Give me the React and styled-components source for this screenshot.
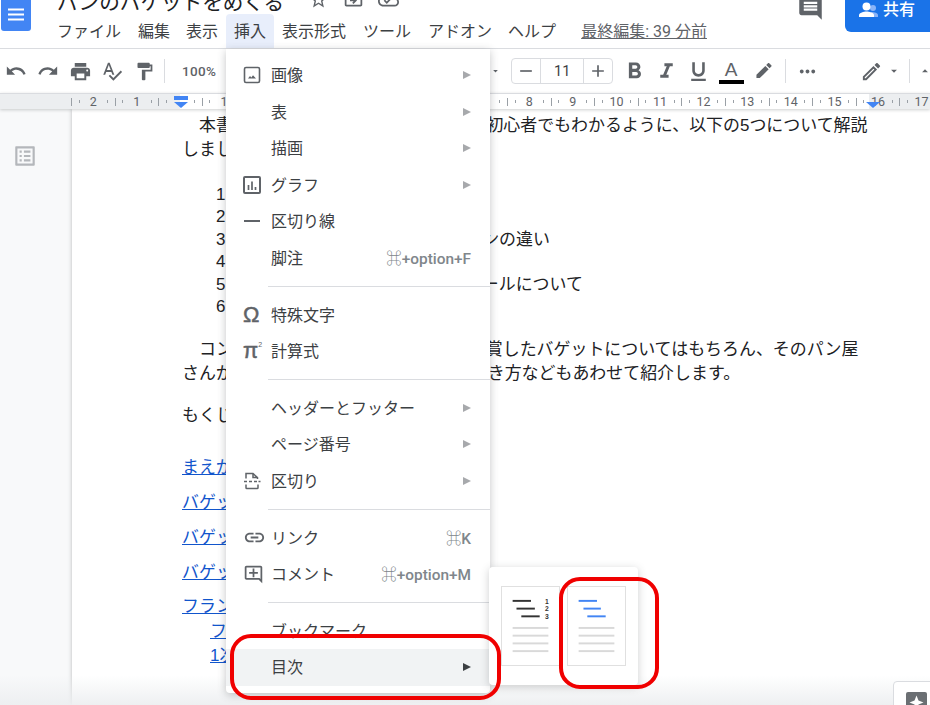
import React from 'react'
import styled, { createGlobalStyle } from 'styled-components'
import {
  MdUndo, MdRedo, MdPrint, MdSpellcheck, MdFormatPaint, MdRemove, MdAdd, MdFormatBold, MdFormatItalic,
  MdFormatUnderlined, MdMoreHoriz, MdOutlineEdit, MdStarBorder, MdOutlineDriveFileMove, MdOutlineCloudDone,
  MdLink, MdOutlineAddComment, MdOutlineListAlt, MdInsertComment, MdArrowDropDown, MdArrowDropUp,
} from 'react-icons/md'

const Global = createGlobalStyle`
  html, body { margin: 0; padding: 0; background: #fff; }
  * { box-sizing: border-box; }
  body { font-family: "Roboto", "Noto Sans CJK JP", sans-serif; color: #202124; }
`

const Page = styled.div`
  position: relative;
  width: 930px;
  height: 705px;
  overflow: hidden;
  display: flex;
  flex-direction: column;
  background: #fff;
`

const Header = styled.header`
  flex: 0 0 49px;
  display: flex;
  border-bottom: 1px solid #dadce0;
  overflow: hidden;
`

const Logo = styled.svg`
  flex: none;
  width: 30px;
  height: 31px;
  margin-left: 1px;
`

const HeadMain = styled.div`
  flex: 1;
  margin-left: 26px;
  margin-top: -11px;
`

const TitleRow = styled.div`
  height: 28px;
  display: flex;
  align-items: center;
  color: #5f6368;
`

const Title = styled.div`
  width: 227px;
  margin-right: 24px;
  font-size: 20.6px;
  line-height: 28px;
  color: #202124;
  white-space: nowrap;
`

const TitleIcon = styled.span`
  width: 35px;
  margin-top: -8px;
  font-size: 21px;
  display: flex;
`

const MenuBar = styled.nav`
  display: flex;
  align-items: center;
  height: 34px;
  margin-top: -3px;
  margin-left: -8px;
`

const MenuName = styled.span`
  height: 34px;
  padding: 0 8px;
  margin-right: ${p => p.$gap || 0}px;
  font-size: 16px;
  line-height: 35px;
  white-space: nowrap;
  color: #3c4043;
  border-radius: 4px 4px 0 0;
  background: ${p => (p.$open ? '#e8eefb' : 'transparent')};
`

const LastEdit = styled.span`
  margin: 0 0 3px 17px;
  font-size: 16px;
  color: #5f6368;
  text-decoration: underline;
  white-space: nowrap;
`

const HeadRight = styled.div`
  flex: none;
  display: flex;
  align-items: flex-start;
  color: #5f6368;
`

const CommentIcon = styled.span`
  display: flex;
  margin: -5px 21px 0 0;
  font-size: 27px;
`

const Share = styled.div`
  width: 85px;
  height: 32px;
  display: flex;
  align-items: flex-start;
  gap: 4px;
  padding: 0 0 0 14px;
  background: #1a73e8;
  color: #fff;
  font-size: 16px;
  line-height: 20px;
  font-weight: 500;
  border-radius: 0 0 0 6px;
`

const ShareIcon = styled.svg`
  width: 20px;
  height: 16px;
  margin-top: 2px;
`

const Toolbar = styled.div`
  flex: 0 0 44px;
  display: flex;
  align-items: center;
  color: #5f6368;
`

const ToolGroup = styled.div`
  display: flex;
  align-items: center;
  margin-left: ${p => p.$left || 0}px;
`

const Tool = styled.span`
  width: ${p => p.$w || 32}px;
  margin-left: ${p => p.$left || 0}px;
  display: flex;
  justify-content: center;
  align-items: center;
  font-size: ${p => p.$size || 22}px;
`

const MarkerIcon = styled.svg`
  width: 18px;
  height: 16px;
`

const Sep = styled.span`
  width: 1px;
  height: 24px;
  margin: 0 ${p => p.$m || 11}px;
  background: #dadce0;
`

const Zoom = styled.span`
  margin-left: 13px;
  font-size: 13.5px;
  font-weight: 500;
  letter-spacing: .3px;
`

const Stepper = styled.div`
  width: 102px;
  height: 26px;
  margin: 0 5px 0 10px;
  display: flex;
  border: 1px solid #dadce0;
  border-radius: 4px;
`

const StepBtn = styled.span`
  width: 28px;
  display: flex;
  align-items: center;
  justify-content: center;
  font-size: 20px;
`

const StepValue = styled.span`
  flex: 1;
  text-align: center;
  line-height: 26px;
  font-size: 14.5px;
  color: #3c4043;
  border-left: 1px solid #dadce0;
  border-right: 1px solid #dadce0;
`

const ColorA = styled.span`
  width: 26px;
  margin: 0 4px;
  display: flex;
  flex-direction: column;
  align-items: center;
  font-size: 19px;
  font-family: "Liberation Sans", sans-serif;
  line-height: 21px;
`

const ColorBar = styled.span`
  width: 25px;
  height: 4px;
  background: #000;
`

const Ruler = styled.div`
  position: relative;
  flex: 0 0 16px;
  display: flex;
  padding-left: 71px;
  overflow: hidden;
  border-top: 1px solid #dadce0;
  background: linear-gradient(to right, #eceef0 180px, #fff 180px, #fff 869px, #eceef0 869px);
  box-shadow: 0 1px 3px rgba(60, 64, 67, .25);
  z-index: 1;
`

const RulerCell = styled.div`
  flex: 0 0 43.6px;
  display: flex;
  align-items: center;
  justify-content: space-between;
  font-size: 12.5px;
  font-family: "Roboto", sans-serif;
  color: #5f6368;
`

const Tick = styled.i`
  width: 1px;
  height: ${p => (p.$long ? 8 : 3)}px;
  background: #9aa0a6;
`

const RulerNum = styled.span`
  width: 14px;
  text-align: center;
`

const IndentBar = styled.div`
  position: absolute;
  left: 174px;
  top: 96px;
  width: 14px;
  height: 4px;
  background: #4285f4;
  z-index: 1;
`

const IndentMark = styled.div`
  position: absolute;
  left: ${p => p.$x}px;
  top: 102px;
  width: 0;
  height: 0;
  border-left: 7px solid transparent;
  border-right: 7px solid transparent;
  border-top: 6px solid #4285f4;
  z-index: 1;
`

const Body = styled.div`
  flex: 1;
  display: flex;
  min-height: 0;
`

const Side = styled.aside`
  flex: 0 0 72px;
  padding: 34px 0 0 12px;
  background: #f8f9fa;
  color: #b4b7bb;
  font-size: 26px;
`

const Doc = styled.main`
  flex: 1;
  padding: 4.5px 0 0 110px;
  font-family: "Liberation Sans", "Noto Sans CJK JP", sans-serif;
  font-size: 16.95px;
  line-height: 24px;
  color: #202124;
  box-shadow: 0 0 4px rgba(60, 64, 67, .35);
  white-space: nowrap;
  overflow: hidden;
`

const Para = styled.div`
  margin-top: ${p => p.$top || 0}px;
`

const Indent = styled.span`
  display: inline-block;
  width: 17px;
`

const ListItem = styled.div`
  display: flex;
  height: 22.6px;
  line-height: 22.6px;
  padding-left: 34px;
`

const ListNum = styled.span`
  width: 29px;
`

const DocLink = styled.a`
  display: block;
  width: fit-content;
  margin: ${p => p.$top || 0}px 0 0 ${p => p.$left || 0}px;
  color: #1155cc;
  text-decoration: underline;
`

const BottomFade = styled.div`
  position: absolute;
  left: 0;
  right: 0;
  bottom: 0;
  height: 30px;
  background: linear-gradient(to bottom, rgba(241, 243, 244, 0), rgba(236, 238, 240, .9));
  pointer-events: none;
`

const Explore = styled.div`
  position: absolute;
  right: -6px;
  bottom: -6px;
  width: 43px;
  height: 30px;
  padding: 10px 0 0 12px;
  background: #fff;
  border: 1px solid #dadce0;
  border-radius: 4px;
`

const ExploreIcon = styled.svg`
  display: block;
  width: 21px;
  height: 21px;
`

const Menu = styled.div`
  position: absolute;
  left: 226px;
  top: 49px;
  width: 264px;
  height: 644px;
  padding: 7.7px 0;
  background: #fff;
  border-radius: 0 0 4px 4px;
  box-shadow: 0 2px 8px rgba(60, 64, 67, .3);
  z-index: 2;
`

const Row = styled.div`
  height: 36.6px;
  display: flex;
  align-items: center;
  padding: 0 19px 0 17px;
  background: ${p => (p.$active ? '#f1f3f4' : 'transparent')};
`

const RowIcon = styled.span`
  flex: 0 0 28px;
  display: flex;
  align-items: center;
  color: #5f6368;
  font-size: ${p => p.$size || 21}px;
`

const Glyph = styled.span`
  font-family: "Liberation Sans", sans-serif;
  font-size: 22px;
  line-height: 1;
  -webkit-text-stroke: .5px currentColor;
`

const Sup = styled.sup`
  font-size: 7px;
  vertical-align: 11px;
  line-height: 0;
  -webkit-text-stroke: 0;
`

const RowLabel = styled.span`
  flex: 1;
  margin-bottom: 2px;
  font-size: 16px;
  color: #3c4043;
  white-space: nowrap;
`

const Shortcut = styled.span`
  margin-bottom: 2px;
  font-size: 15.4px;
  font-weight: 500;
  color: #80868b;
  white-space: nowrap;
`

const Arrow = styled.i`
  width: 0;
  height: 0;
  border-top: 4px solid transparent;
  border-bottom: 4px solid transparent;
  border-left: 8px solid ${p => (p.$dark ? '#3c4043' : '#a7a9ac')};
`

const Divider = styled.div`
  height: 1px;
  margin: 10px 0 9px 42px;
  background: #dadce0;
`

const RowSvg = styled.svg`
  width: 18px;
  height: 18px;
`

const Flyout = styled.div`
  position: absolute;
  left: 489px;
  top: 567px;
  width: 149px;
  height: 118px;
  display: flex;
  gap: 7px;
  padding: 19px 0 0 12px;
  background: #fff;
  border-radius: 4px;
  box-shadow: 0 2px 8px rgba(60, 64, 67, .25);
  z-index: 3;
`

const Thumb = styled.svg`
  flex: none;
  width: 59px;
  height: 80px;
  border: 1px solid #e0e0e0;
`

const Ring = styled.div`
  position: absolute;
  left: ${p => p.$x}px;
  top: ${p => p.$y}px;
  width: ${p => p.$w}px;
  height: ${p => p.$h}px;
  border: 4px solid #f00000;
  border-radius: 21px;
  z-index: 4;
`

const ImageIcon = () => (
  <RowSvg viewBox="0 0 18 18" fill="none" stroke="currentColor">
    <rect x="1.500" y="1.500" width="15" height="15" rx="1.500" strokeWidth="1.600" />
    <path d="M5 12.500l2-2.400 1.400 1.400 1.600-2.200 3 3.200z" fill="currentColor" stroke="none" />
  </RowSvg>
)

const ChartIcon = () => (
  <RowSvg viewBox="0 0 18 18" fill="none" stroke="currentColor">
    <rect x="1" y="1" width="16" height="16" rx="1" strokeWidth="2" />
    <path d="M5.500 14V9M9 14V5.500M12.500 14v-3" strokeWidth="1.700" />
  </RowSvg>
)

const LineIcon = () => (
  <RowSvg viewBox="0 0 18 18"><rect x="1" y="8" width="16" height="2" fill="currentColor" /></RowSvg>
)

const BreakIcon = () => (
  <RowSvg viewBox="0 0 18 18" fill="none" stroke="currentColor" strokeWidth="1.500">
    <path d="M3 6.500V1.500h7l4.500 4V7M10 1.500v4h4.500" />
    <path d="M1 9.500h3M6 9.500h3M11 9.500h3M15.500 9.500h2" />
    <path d="M3 12.500v3.200c0 .5.300.8.800.8h10.400c.5 0 .8-.3.800-.8v-3.200" />
  </RowSvg>
)

const Item = ({ icon, size, label, more, keys, active }) => (
  <Row $active={active}>
    <RowIcon $size={size}>{icon}</RowIcon>
    <RowLabel>{label}</RowLabel>
    {keys && <Shortcut>{keys}</Shortcut>}
    {more && <Arrow $dark={active} />}
  </Row>
)

const ThumbLines = ({ x }) => (
  <g fill="#d9d9d9">
    {[41, 49, 57, 65].map(y => <rect key={y} x={x} y={y} width="37" height="2" />)}
  </g>
)

const rulerCells = ['2', '1', '', '1', '2', '3', '4', '5', '6', '7', '8', '9', '10', '11', '12', '13', '14', '15', '16', '17']

const App = () => (
  <Page>
    <Global />
    <Header>
      <Logo viewBox="0 0 30 31">
        <path d="M0 0h30v28a3 3 0 0 1-3 3H3a3 3 0 0 1-3-3z" fill="#4285f4" />
        <path d="M7 8.500h16v2H7zM7 13.500h16v2H7zM7 18.500h16v2H7z" fill="#fff" />
      </Logo>
      <HeadMain>
        <TitleRow>
          <Title>パンのバケットをめくる</Title>
          <TitleIcon><MdStarBorder /></TitleIcon>
          <TitleIcon><MdOutlineDriveFileMove /></TitleIcon>
          <TitleIcon><MdOutlineCloudDone /></TitleIcon>
        </TitleRow>
        <MenuBar>
          <MenuName $gap={1}>ファイル</MenuName>
          <MenuName>編集</MenuName>
          <MenuName>表示</MenuName>
          <MenuName $open>挿入</MenuName>
          <MenuName $gap={1}>表示形式</MenuName>
          <MenuName $gap={1}>ツール</MenuName>
          <MenuName>アドオン</MenuName>
          <MenuName>ヘルプ</MenuName>
          <LastEdit>最終編集: 39 分前</LastEdit>
        </MenuBar>
      </HeadMain>
      <HeadRight>
        <CommentIcon><MdInsertComment /></CommentIcon>
        <Share>
          <ShareIcon viewBox="0 0 20 16">
            <circle cx="14" cy="6" r="3" fill="#8ab4f8" />
            <path d="M12 10c3.500 0 7 1.300 7 3v2h-7z" fill="#8ab4f8" />
            <circle cx="7.500" cy="4.500" r="4" fill="#fff" />
            <path d="M0 15v-2c0-2.400 5-3.600 7.500-3.600S15 10.600 15 13v2z" fill="#fff" />
          </ShareIcon>
          共有
        </Share>
      </HeadRight>
    </Header>

    <Toolbar>
      <ToolGroup>
        <Tool><MdUndo /></Tool>
        <Tool><MdRedo /></Tool>
        <Tool $size={23}><MdPrint /></Tool>
        <Tool><MdSpellcheck /></Tool>
        <Tool $size={21}><MdFormatPaint /></Tool>
        <Sep $m={4} />
        <Zoom>100%</Zoom>
      </ToolGroup>
      <ToolGroup $left={274}>
        <Tool $w={11} $size={24}><MdArrowDropDown /></Tool>
        <Stepper>
          <StepBtn><MdRemove /></StepBtn>
          <StepValue>11</StepValue>
          <StepBtn><MdAdd /></StepBtn>
        </Stepper>
        <Tool $size={27}><MdFormatBold /></Tool>
        <Tool $size={25}><MdFormatItalic /></Tool>
        <Tool $size={25}><MdFormatUnderlined /></Tool>
        <ColorA>A<ColorBar /></ColorA>
        <Tool>
          <MarkerIcon viewBox="3 0 19 18" fill="currentColor">
            <path d="M17.750 7L14 3.250l-10 10V17h3.750l10-10zm2.960-2.960c.39-.39.39-1.020 0-1.410L18.370.29c-.39-.39-1.020-.39-1.410 0L15 2.250 18.750 6l1.960-1.960z" />
          </MarkerIcon>
        </Tool>
        <Sep $m={5} />
        <Tool $size={23}><MdMoreHoriz /></Tool>
        <Tool $size={23} $left={32}><MdOutlineEdit /></Tool>
        <Tool $w={14} $size={24}><MdArrowDropDown /></Tool>
        <Sep $m={8} />
        <Tool $w={14} $size={24}><MdArrowDropUp /></Tool>
      </ToolGroup>
    </Toolbar>

    <Ruler>
      {rulerCells.map((n, i) => (
        <RulerCell key={i}>
          <Tick $long />
          <Tick />
          <RulerNum>{n}</RulerNum>
          <Tick />
          <span />
        </RulerCell>
      ))}
    </Ruler>
    <IndentBar />
    <IndentMark $x={174} />
    <IndentMark $x={866} />

    <Body>
      <Side><MdOutlineListAlt /></Side>
      <Doc>
        <Para>
          <Indent />本書では、パンのバゲットについて、初心者でもわかるように、以下の5つについて解説
          <br />しました。
        </Para>
        <Para $top={22}>
          <ListItem><ListNum>1</ListNum>まえがき</ListItem>
          <ListItem><ListNum>2</ListNum>バゲットとは</ListItem>
          <ListItem><ListNum>3</ListNum>バゲットとその他のフランスパンの違い</ListItem>
          <ListItem><ListNum>4</ListNum>バゲットの歴史</ListItem>
          <ListItem><ListNum>5</ListNum>フランスの人気バゲットコンクールについて</ListItem>
          <ListItem><ListNum>6</ListNum>おわりに</ListItem>
        </Para>
        <Para $top={19}>
          <Indent />コンクールで、パリのグランプリを受賞したバゲットについてはもちろん、そのパン屋
          <br />さんがおすすめする、パンの美味しい焼き方などもあわせて紹介します。
        </Para>
        <Para $top={18}>もくじ</Para>
        <DocLink $top={28}>まえがき</DocLink>
        <DocLink $top={11}>バゲットとは</DocLink>
        <DocLink $top={11}>バゲットの歴史</DocLink>
        <DocLink $top={11}>バゲットの種類</DocLink>
        <DocLink $top={10}>フランスのコンクール</DocLink>
        <DocLink $top={1} $left={28}>フランス</DocLink>
        <DocLink $left={28}>1次審査</DocLink>
      </Doc>
    </Body>

    <BottomFade />
    <Explore>
      <ExploreIcon viewBox="0 0 21 21">
        <rect width="21" height="21" rx="2" fill="#6b6f73" />
        <path d="M10.500 3.500l2 5 5 2-5 2-2 5-2-5-5-2 5-2z" fill="#fff" />
      </ExploreIcon>
    </Explore>

    <Menu>
      <Item icon={<ImageIcon />} label="画像" more />
      <Item label="表" more />
      <Item label="描画" more />
      <Item icon={<ChartIcon />} label="グラフ" more />
      <Item icon={<LineIcon />} label="区切り線" />
      <Item label="脚注" keys="⌘+option+F" />
      <Divider />
      <Item icon={<Glyph>Ω</Glyph>} label="特殊文字" />
      <Item icon={<Glyph>π<Sup>2</Sup></Glyph>} label="計算式" />
      <Divider />
      <Item label="ヘッダーとフッター" more />
      <Item label="ページ番号" more />
      <Item icon={<BreakIcon />} label="区切り" more />
      <Divider />
      <Item icon={<MdLink />} size={23} label="リンク" keys="⌘K" />
      <Item icon={<MdOutlineAddComment />} label="コメント" keys="⌘+option+M" />
      <Divider />
      <Item label="ブックマーク" />
      <Item label="目次" more active />
    </Menu>

    <Flyout>
      <Thumb viewBox="0 0 59 80">
        <g fill="#333">
          <rect x="11" y="13" width="19" height="2" />
          <rect x="15" y="21" width="19" height="2" />
          <rect x="20" y="29" width="19" height="2" />
        </g>
        <g fill="#333" fontSize="7" fontWeight="700" fontFamily="Liberation Sans">
          <text x="44.500" y="17">1</text>
          <text x="44.500" y="25">2</text>
          <text x="44.500" y="33">3</text>
        </g>
        <ThumbLines x={11} />
      </Thumb>
      <Thumb viewBox="0 0 59 80">
        <g fill="#4285f4">
          <rect x="11" y="13" width="19" height="2" />
          <rect x="16" y="21" width="18" height="2" />
          <rect x="20" y="29" width="19" height="2" />
        </g>
        <ThumbLines x={11} />
      </Thumb>
    </Flyout>

    <Ring $x={230} $y={634} $w={271} $h={66} />
    <Ring $x={559} $y={577} $w={100} $h={112} />
  </Page>
)

export default App
